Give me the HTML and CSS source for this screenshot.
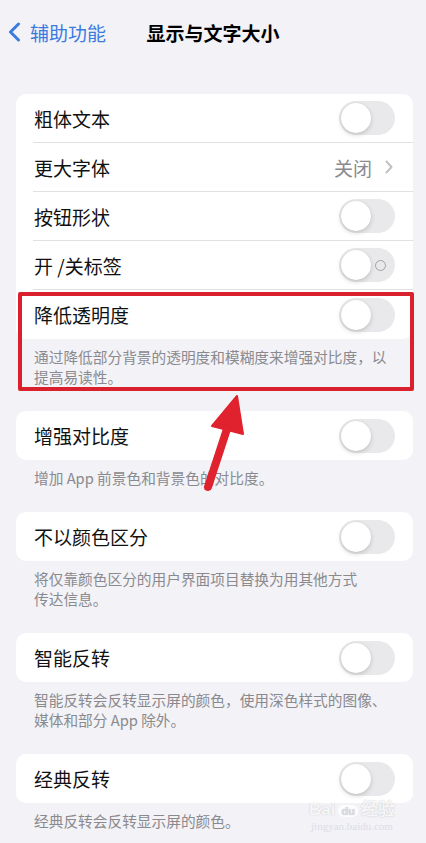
FILE: index.html
```html
<!DOCTYPE html>
<html lang="zh-CN">
<head>
  <meta charset="UTF-8">
  <meta name="viewport" content="width=device-width, initial-scale=1.0">
  <title>显示与文字大小</title>
  <link rel="stylesheet" href="styles.css">
</head>
<body>
  <div class="page">
    <header class="nav">
      <a class="back" href="#">
        <svg width="13" height="20" viewBox="0 0 13 20"><path d="M10.5 2 L2.5 10 L10.5 18" fill="none" stroke="currentColor" stroke-width="3" stroke-linecap="round" stroke-linejoin="round"/></svg>
        <span>辅助功能</span>
      </a>
      <h1 class="title">显示与文字大小</h1>
      <span></span>
    </header>

    <main class="content">
      <!-- Group 1 -->
      <div class="card first">
        <div class="row"><div class="row-body"><span class="label">粗体文本</span><span class="switch"><span class="knob"></span></span></div></div>
        <div class="row"><div class="row-body"><span class="label">更大字体</span>
          <span class="value">关闭
            <svg width="8" height="14" viewBox="0 0 8 14"><path d="M1.5 1.5 L6.5 7 L1.5 12.5" fill="none" stroke="currentColor" stroke-width="2" stroke-linecap="round" stroke-linejoin="round"/></svg>
          </span></div></div>
        <div class="row"><div class="row-body"><span class="label">按钮形状</span><span class="switch"><span class="knob"></span></span></div></div>
        <div class="row"><div class="row-body"><span class="label">开 /关标签</span><span class="switch"><span class="knob"></span><span class="ring"></span></span></div></div>
        <div class="row"><div class="row-body"><span class="label">降低透明度</span><span class="switch"><span class="knob"></span></span></div></div>
      </div>
      <p class="note">通过降低部分背景的透明度和模糊度来增强对比度，以<br>提高易读性。</p>

      <div class="card">
        <div class="row"><div class="row-body"><span class="label">增强对比度</span><span class="switch"><span class="knob"></span></span></div></div>
      </div>
      <p class="note">增加 App 前景色和背景色的对比度。</p>

      <div class="card">
        <div class="row"><div class="row-body"><span class="label">不以颜色区分</span><span class="switch"><span class="knob"></span></span></div></div>
      </div>
      <p class="note">将仅靠颜色区分的用户界面项目替换为用其他方式<br>传达信息。</p>

      <div class="card">
        <div class="row"><div class="row-body"><span class="label">智能反转</span><span class="switch"><span class="knob"></span></span></div></div>
      </div>
      <p class="note">智能反转会反转显示屏的颜色，使用深色样式的图像、<br>媒体和部分 App 除外。</p>

      <div class="card">
        <div class="row"><div class="row-body"><span class="label">经典反转</span><span class="switch"><span class="knob"></span></span></div></div>
      </div>
      <p class="note">经典反转会反转显示屏的颜色。</p>
    </main>

    <!-- annotation drawn over the screenshot -->
    <div class="highlight"></div>
    <svg class="arrow" width="60" height="105" viewBox="0 0 60 105">
      <path d="M42 5 L17 35 L48 43 Z" fill="#e0212e" stroke="#e0212e" stroke-width="2" stroke-linejoin="round"/>
      <path d="M13 96 L32 38" stroke="#e0212e" stroke-width="8" stroke-linecap="round"/>
    </svg>

    <div class="watermark">
      <div class="wm-logo">Bai<span class="paw">du</span>经验</div>
      <div class="wm-url">jingyan.baidu.com</div>
    </div>
  </div>
</body>
</html>
```

FILE: styles.css
```css
body {
  margin: 0;
  background-color: #f2f2f7;
  font-family: "Noto Sans CJK SC", "Noto Sans", sans-serif;
  color: #111;
}

.page {
  position: relative;
  width: 426px;
  height: 843px;
  overflow: hidden;
}

/* Navigation bar */
.nav {
  display: grid;
  grid-template-columns: 1fr auto 1fr;
  align-items: center;
  height: 28px;
  padding-top: 18px;
}

.back {
  display: flex;
  align-items: center;
  gap: 9px;
  padding-left: 8px;
  color: #3a7be0;
  font-size: 19px;
  text-decoration: none;
}

.title {
  margin: 0;
  font-size: 19px;
  font-weight: 600;
  color: #000;
}

/* Groups */
.content {
  margin: 0 13px 0 16px;
}

.card {
  background-color: #fff;
  border-radius: 10px;
  overflow: hidden;
}

.card.first {
  margin-top: 48px;
}

.row {
  padding-left: 17px;
}

.row-body {
  display: flex;
  align-items: center;
  justify-content: space-between;
  height: 49px;
  box-sizing: border-box;
  padding-right: 18px;
  border-bottom: 1px solid #e1e1e4;
}

.row:last-child .row-body {
  border-bottom: none;
}

.label {
  padding-left: 1px;
  font-size: 19px;
}

.value {
  display: flex;
  align-items: center;
  gap: 13px;
  font-size: 19px;
  color: #8a8a8e;
  padding-right: 2px;
}

.value svg {
  color: #c2c2c6;
}

/* Toggle, off state */
.switch {
  display: flex;
  align-items: center;
  width: 56px;
  height: 34px;
  padding: 2px;
  box-sizing: border-box;
  border-radius: 17px;
  background-color: #e9e9eb;
}

.knob {
  width: 30px;
  height: 30px;
  border-radius: 50%;
  background-color: #fff;
  box-shadow: 0 2px 5px rgba(0, 0, 0, 0.16), 0 0 1px rgba(0, 0, 0, 0.12);
}

.ring {
  width: 9px;
  height: 9px;
  margin-left: auto;
  margin-right: 7px;
  border: 1.5px solid #a2a2a6;
  border-radius: 50%;
}

.note {
  margin: 0;
  padding: 8px 17px 24px 18px;
  font-size: 14.7px;
  line-height: 20px;
  color: #8a8a8e;
}

/* Red annotation */
.highlight {
  position: absolute;
  left: 18px;
  top: 292px;
  width: 388px;
  height: 91px;
  border: 4px solid #d9212d;
  border-radius: 2px;
}

.arrow {
  position: absolute;
  left: 195px;
  top: 391px;
}

/* Watermark */
.watermark {
  position: absolute;
  left: 309px;
  top: 795px;
  text-align: center;
}

.wm-logo {
  font-family: "Liberation Sans", sans-serif;
  font-size: 17px;
  font-weight: bold;
  color: rgba(255, 255, 255, 0.9);
  text-shadow: 0 0 1px rgba(120, 120, 130, 0.5);
}

.paw {
  display: inline-block;
  margin: 0 3px;
  padding: 0 3px;
  font-size: 11px;
  border-radius: 8px;
  background-color: rgba(255, 255, 255, 0.85);
  color: #dcdce2;
}

.wm-url {
  font-family: "Liberation Serif", serif;
  font-size: 11px;
  color: rgba(215, 215, 225, 0.8);
}
```
